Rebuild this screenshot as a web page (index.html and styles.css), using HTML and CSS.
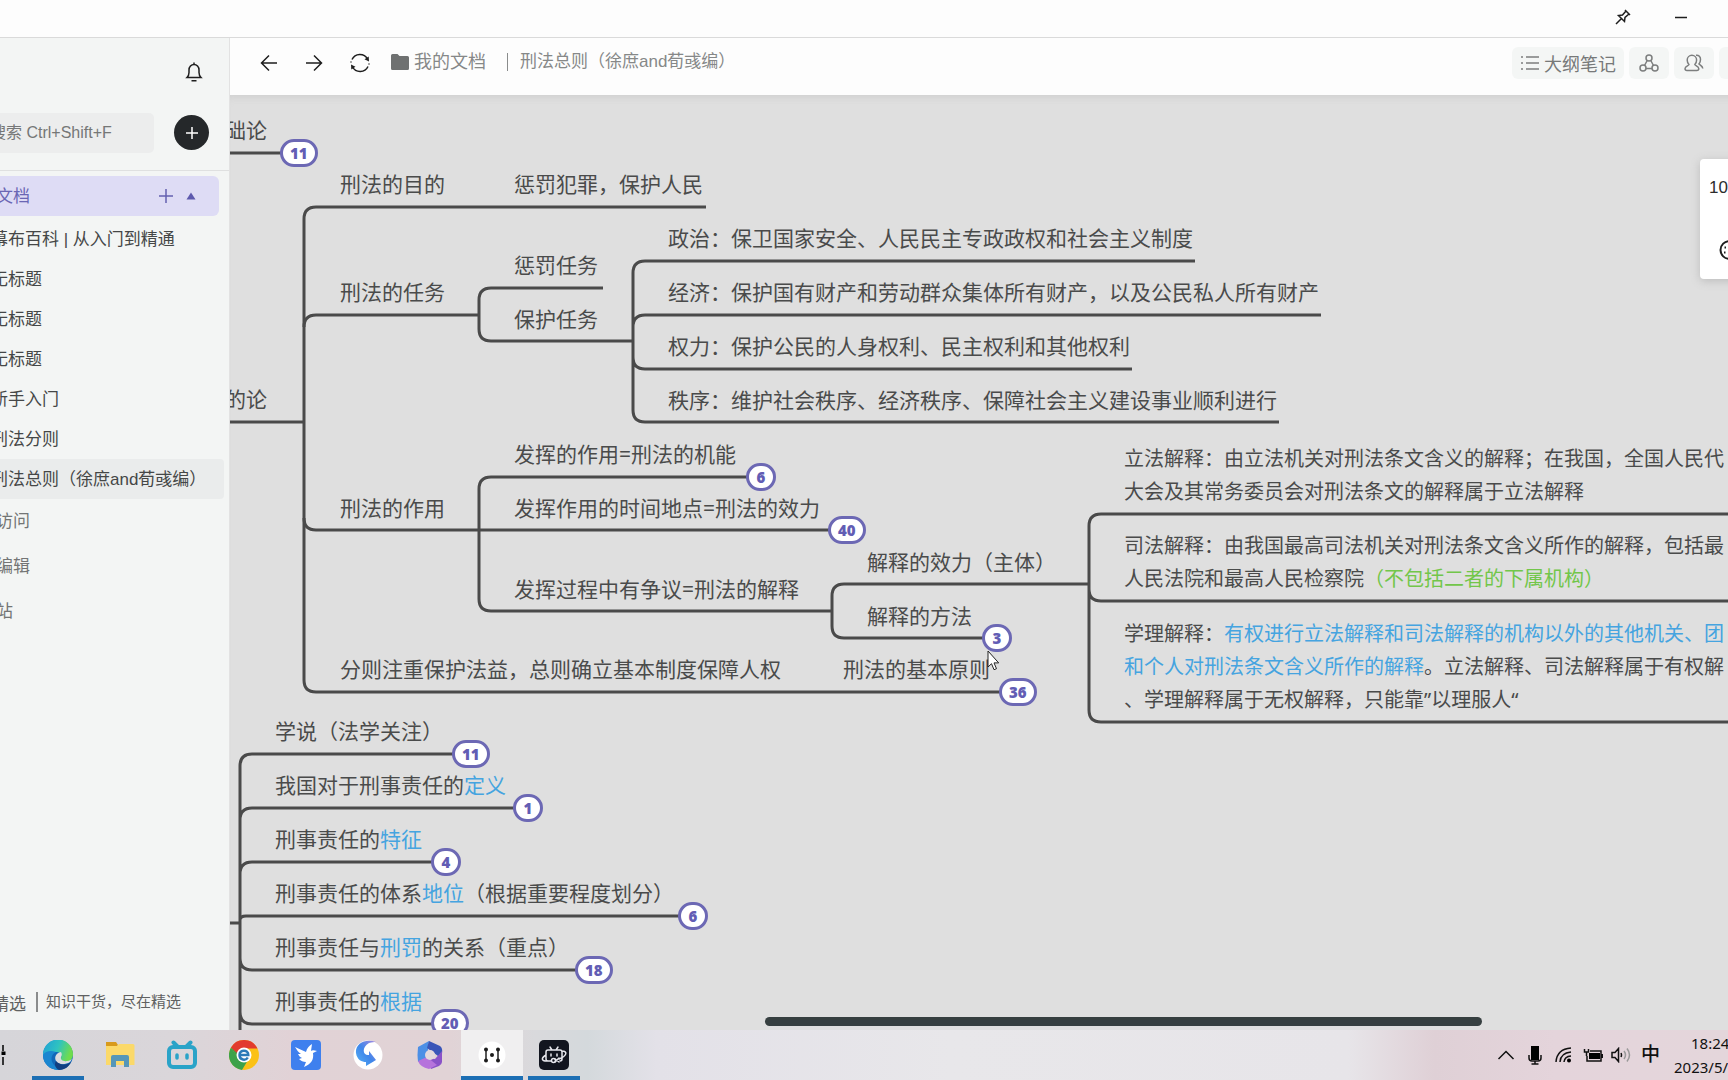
FILE: index.html
```html
<!DOCTYPE html>
<html lang="zh-CN">
<head>
<meta charset="utf-8">
<title>刑法总则</title>
<link rel="stylesheet" href="styles.css">
</head>
<body>
<div class="window">
  <header class="titlebar">
    <button class="win-btn" aria-label="置顶"><svg width="18" height="18" viewBox="0 0 18 18"><path d="M11 2l5 5M12 3L8.500 7 4.500 7.500l6 6 .5-4L15 6M7.500 10.500L2 16" /></svg></button>
    <button class="win-btn" aria-label="最小化"><svg width="14" height="14" viewBox="0 0 14 14"><path d="M1 7.500h12"/></svg></button>
  </header>
  <div class="body">
    <aside class="sidebar">
      <div class="side-top">
        <button class="icon-btn" aria-label="通知"><svg width="20" height="22" viewBox="0 0 20 22"><path d="M3 16.500c1.500-1.500 2-3 2-5V9a5 5.500 0 0 1 10 0v2.500c0 2 .5 3.500 2 5zM10 3.500V1.500M7.500 19.700h5"/></svg></button>
      </div>
      <div class="side-search">
        <input class="search" type="text" placeholder="搜索 Ctrl+Shift+F" aria-label="搜索">
        <button class="add" aria-label="新建"><svg width="14" height="14" viewBox="0 0 14 14"><path d="M7 1v12M1 7h12"/></svg></button>
      </div>
      <nav class="side-nav">
        <div class="folder-row">
          <a href="#">我的文档</a>
          <button class="mini" aria-label="添加"><svg width="16" height="16" viewBox="0 0 16 16"><path d="M8 1v14M1 8h14"/></svg></button>
          <button class="mini tri" aria-label="收起"><svg width="10" height="8" viewBox="0 0 10 8"><path d="M5 0.500L9.500 7.500h-9z"/></svg></button>
        </div>
        <a class="doc" href="#">幕布百科 | 从入门到精通</a>
        <a class="doc" href="#">无标题</a>
        <a class="doc" href="#">无标题</a>
        <a class="doc" href="#">无标题</a>
        <a class="doc" href="#">新手入门</a>
        <a class="doc" href="#">刑法分则</a>
        <a class="doc current" href="#">刑法总则（徐庶and荀彧编）</a>
        <a class="group" href="#">最近访问</a>
        <a class="group" href="#">最近编辑</a>
        <a class="group" href="#">回收站</a>
      </nav>
      <a class="side-foot" href="#"><span>精选</span><small>知识干货，尽在精选</small></a>
    </aside>

    <main class="main">
      <div class="toolbar">
        <div class="history">
          <button class="icon-btn" aria-label="后退"><svg width="18" height="18" viewBox="0 0 18 18"><path d="M17 9H1.500M9 1.500L1.500 9 9 16.500"/></svg></button>
          <button class="icon-btn" aria-label="前进"><svg width="18" height="18" viewBox="0 0 18 18"><path d="M1 9h15.500M9 1.500L16.500 9 9 16.500"/></svg></button>
          <button class="icon-btn" aria-label="刷新"><svg width="20" height="20" viewBox="0 0 20 20"><path d="M2 6.500A8.700 8.700 0 0 1 17.500 6M18 13.500A8.700 8.700 0 0 1 2.500 14M1 8.500v1M19 10.500v1"/><path class="solid" d="M18.700 3.500l.3 5-4.500-2.300zM1.300 16.500l-.3-5 4.500 2.300z"/></svg></button>
        </div>
        <div class="crumbs">
          <svg class="folder" width="18" height="16" viewBox="0 0 18 16"><path d="M1.500 0h5l2 2h8A1.500 1.500 0 0 1 18 3.500v11a1.500 1.500 0 0 1-1.500 1.500h-15A1.500 1.500 0 0 1 0 14.500v-13A1.500 1.500 0 0 1 1.500 0z"/></svg>
          <a href="#">我的文档</a><span class="bar"></span><span>刑法总则（徐庶and荀彧编）</span>
        </div>
        <div class="tools">
          <button class="tool"><svg width="20" height="16" viewBox="0 0 20 16"><path d="M6 2h13M6 8h13M6 14h13M1 2h2M1 8h2M1 14h2"/></svg>大纲笔记</button>
          <button class="tool" aria-label="导图"><svg width="20" height="18" viewBox="0 0 20 18"><circle cx="10" cy="4" r="3"/><circle cx="4" cy="14" r="3"/><circle cx="16" cy="14" r="3"/><path d="M8.200 6.500L5.500 11.500M11.800 6.500l2.700 5M7 14.500h6"/></svg></button>
          <button class="tool" aria-label="协作"><svg width="20" height="18" viewBox="0 0 20 18"><path d="M5 10.500C3.800 9.500 3.200 7.800 3.200 6a4.700 4.700 0 0 1 9.400 0c0 1.800-.6 3.500-1.800 4.500 0 1 4 1.500 4 4.300 0 1.500-1 1.700-2 1.700H3c-1 0-2-.2-2-1.700 0-2.800 4-3.300 4-4.300zM12 1.200c2.800-.4 4.700 1.800 4.500 4.300 0 2-.8 3.500-1.500 4.500 1.500 1.500 3.500 2 3.800 4.500"/></svg></button>
          <button class="tool" aria-label="更多"><svg width="18" height="4" viewBox="0 0 18 4"><path d="M1 2h2M8 2h2M15 2h2"/></svg></button>
        </div>
      </div>

      <div class="canvas">
        <div class="plane">
          <svg class="links" width="1760" height="1060" viewBox="0 0 1760 1060">
            <path d="M200 153h82M200 422h104M706 207H316q-12 0-12 12V680q0 12 12 12H1003"/>
            <path d="M304 327q0-12 12-12H479M304 518q0 12 12 12H830"/>
            <path d="M603 288H491q-12 0-12 12v29q0 12 12 12H633"/>
            <path d="M1195 261H645q-12 0-12 12V410q0 12 12 12H1279M633 327q0-12 12-12H1321M633 357q0 12 12 12H1132"/>
            <path d="M748 477H491q-12 0-12 12V599q0 12 12 12H832"/>
            <path d="M1089 584H844q-12 0-12 12v30q0 12 12 12H984"/>
            <path d="M1760 514H1101q-12 0-12 12V710q0 12 12 12H1760M1089 589q0 12 12 12H1760"/>
            <path d="M454 754H252q-12 0-12 12V1060M240 820q0-12 12-12H515M240 874q0-12 12-12H433M240 920q0-4 6-4H680M240 958q0 12 12 12H576M240 1012q0 12 12 12H433M200 923h40"/>
          </svg>
          <p class="node" style="left:204px;top:115px">基础论</p>
          <p class="node" style="left:204px;top:384px">目的论</p>
          <p class="node" style="left:340px;top:169px">刑法的目的</p>
          <p class="node" style="left:514px;top:169px">惩罚犯罪，保护人民</p>
          <p class="node" style="left:340px;top:277px">刑法的任务</p>
          <p class="node" style="left:514px;top:250px">惩罚任务</p>
          <p class="node" style="left:514px;top:304px">保护任务</p>
          <p class="node" style="left:668px;top:223px">政治：保卫国家安全、人民民主专政政权和社会主义制度</p>
          <p class="node" style="left:668px;top:277px">经济：保护国有财产和劳动群众集体所有财产，以及公民私人所有财产</p>
          <p class="node" style="left:668px;top:331px">权力：保护公民的人身权利、民主权利和其他权利</p>
          <p class="node" style="left:668px;top:385px">秩序：维护社会秩序、经济秩序、保障社会主义建设事业顺利进行</p>
          <p class="node" style="left:340px;top:493px">刑法的作用</p>
          <p class="node" style="left:514px;top:439px">发挥的作用=刑法的机能</p>
          <p class="node" style="left:514px;top:493px">发挥作用的时间地点=刑法的效力</p>
          <p class="node" style="left:514px;top:574px">发挥过程中有争议=刑法的解释</p>
          <p class="node" style="left:867px;top:547px">解释的效力（主体）</p>
          <p class="node" style="left:867px;top:601px">解释的方法</p>
          <p class="node" style="left:340px;top:654px">分则注重保护法益，总则确立基本制度保障人权</p>
          <p class="node" style="left:843px;top:654px">刑法的基本原则</p>
          <p class="node long" style="left:1124px;top:442px">立法解释：由立法机关对刑法条文含义的解释；在我国，全国人民代<br>大会及其常务委员会对刑法条文的解释属于立法解释</p>
          <p class="node long" style="left:1124px;top:529px">司法解释：由我国最高司法机关对刑法条文含义所作的解释，包括最<br>人民法院和最高人民检察院<em class="green">（不包括二者的下属机构）</em></p>
          <p class="node long" style="left:1124px;top:617px">学理解释：<em>有权进行立法解释和司法解释的机构以外的其他机关、团</em><br><em>和个人对刑法条文含义所作的解释</em>。立法解释、司法解释属于有权解<br>、学理解释属于无权解释，只能靠”以理服人“</p>
          <p class="node" style="left:275px;top:716px">学说（法学关注）</p>
          <p class="node" style="left:275px;top:770px">我国对于刑事责任的<em>定义</em></p>
          <p class="node" style="left:275px;top:824px">刑事责任的<em>特征</em></p>
          <p class="node" style="left:275px;top:878px">刑事责任的体系<em>地位</em>（根据重要程度划分）</p>
          <p class="node" style="left:275px;top:932px">刑事责任与<em>刑罚</em>的关系（重点）</p>
          <p class="node" style="left:275px;top:986px">刑事责任的<em>根据</em></p>
          <button class="count" style="left:280px;top:139px">11</button>
          <button class="count" style="left:746px;top:463px">6</button>
          <button class="count" style="left:828px;top:516px">40</button>
          <button class="count" style="left:982px;top:624px">3</button>
          <button class="count" style="left:999px;top:678px">36</button>
          <button class="count" style="left:452px;top:740px">11</button>
          <button class="count" style="left:513px;top:794px">1</button>
          <button class="count" style="left:431px;top:848px">4</button>
          <button class="count" style="left:678px;top:902px">6</button>
          <button class="count" style="left:575px;top:956px">18</button>
          <button class="count" style="left:431px;top:1009px">20</button>
          <svg class="cursor" style="left:987px;top:650px" width="14" height="22" viewBox="0 0 14 22"><path d="M1 1v16l3.500-3.300 2.500 6 2.500-1-2.500-5.800h4.700z"/></svg>
        </div>
        <div class="hscroll"></div>
        <div class="panel">
          <span>100%</span>
          <button class="icon-btn" aria-label="主题"><svg width="22" height="20" viewBox="0 0 22 20"><path class="thick" d="M20 12.500C19 16.500 15.500 19 11 19 5.500 19 1.500 15 1.500 10S5.500 1 11 1s9.500 4 9.500 8c0 3-4 3-6 3s-2.500 2-1 4"/><path class="thick" d="M5.500 7.500h1.500M5 12.500h1.500M9.500 5h1.500"/></svg></button>
        </div>
      </div>
    </main>
  </div>
</div>

<footer class="taskbar">
  <div class="apps">
    <button class="app slim" aria-label="任务视图"><svg width="12" height="22" viewBox="0 0 12 22"><path d="M8 1v6M8 13v8" stroke="#000" stroke-width="1.500"/><path d="M6.500 7.500h4v3.500h-4z"/></svg></button>
    <button class="app running" aria-label="Edge"><svg width="30" height="30" viewBox="0 0 30 30"><defs><linearGradient id="e1" x1="0" y1="0" x2="1" y2="0.300"><stop offset="0" stop-color="#1f9fd8"/><stop offset="0.550" stop-color="#2fc3c0"/><stop offset="1" stop-color="#6fdc4e"/></linearGradient></defs><circle cx="15" cy="15" r="15" fill="#1268b8"/><path d="M0 15A15 15 0 0 1 30 14c0 5-3 7.500-7 7.500-4 0-6-1.500-5-3.500 1-3-1-6-5-6-6 0-11 2-13 3z" fill="url(#e1)"/><path d="M13 12c-5 2-6 8-2 13 2 2 5 4 9 4l-5 1A15 15 0 0 1 0 15c2-4 8-5 13-3z" fill="#1a86d0"/><path d="M18 12c-5 1-7 5-5 9 3 4 9 4 14 1l2-3c-6 4-12 2-11-2 1-2 1-3 0-5z" fill="#dcdcdf"/><path d="M13 21c3 4 9 5 15 1-2 5-7 8-12 8-4-2-5-6-3-9z" fill="#123f80"/></svg></button>
    <button class="app" aria-label="文件资源管理器"><svg width="30" height="30" viewBox="0 0 30 30"><path d="M1 2h10l2 3-2 3H1z" fill="#d89a1c"/><path d="M1 6h11l2-2h14q1.500 0 1.500 1.500V25H1z" fill="#fbd96a"/><path d="M6 27V17q0-2 2-2h14q2 0 2 2v10h-5v-6h-8v6z" fill="#5596b8"/></svg></button>
    <button class="app" aria-label="哔哩哔哩"><svg width="32" height="30" viewBox="0 0 32 30" fill="none" stroke="#2aa3c8" stroke-linecap="round"><rect x="3" y="7" width="26" height="20" rx="4" stroke-width="4"/><path d="M7.500 2.500l4 4M24.500 2.500l-4 4" stroke-width="4"/><path d="M11 15v3M21 15v3" stroke-width="3.500"/></svg></button>
    <button class="app" aria-label="浏览器"><svg width="30" height="30" viewBox="0 0 30 30"><circle cx="15" cy="15" r="15" fill="#fbc116"/><path d="M2 7.500A15 15 0 0 0 13 30l6-10-10-2z" fill="#3da24a"/><path d="M2 7.500L9 19l6-10z" fill="#3da24a"/><path d="M2 7.500A15 15 0 0 1 28.500 8.500H15L9 14z" fill="#e23b2e"/><circle cx="15" cy="15" r="7.500" fill="#fff"/><path d="M10.500 15h8.800c0-5.800-8.800-5.800-8.800 0 0 5.500 6.500 5.800 8.300 2.500" fill="none" stroke="#2a7ab8" stroke-width="2.500"/></svg></button>
    <button class="app" aria-label="飞鸟"><svg width="30" height="30" viewBox="0 0 30 30"><rect width="30" height="30" rx="4" fill="#3f80ee"/><path d="M4 7l11 5c1-4 3-6 6-8l-1 7c1-1 3-1 6 0l-4 2c1 7-2 11-9 14l2-5c-3 0-5-1-7-3l3-1c-2-1-3-2-4-4l3 0c-3-2-4-4-6-7z" fill="#fff"/></svg></button>
    <button class="app" aria-label="同步"><svg width="30" height="30" viewBox="0 0 30 30"><defs><linearGradient id="s1" x1="0" y1="1" x2="1" y2="0"><stop offset="0" stop-color="#57b2f5"/><stop offset="0.500" stop-color="#3f86ea"/><stop offset="1" stop-color="#a78ae0"/></linearGradient></defs><circle cx="15" cy="15" r="14.500" fill="#fff"/><path d="M23 2C12-2 2 4 3 13c1 7 6 9 10 9v4l10-6-7-9v4c-6 1-8-7 0-12 3-1 5-1 7-1z" fill="url(#s1)"/></svg></button>
    <button class="app" aria-label="Microsoft 365"><svg width="28" height="30" viewBox="0 0 28 30"><path d="M2 7L13 1l-2 17-9 4q-1-7 0-15z" fill="#4c8fe6"/><path d="M13 1l11 5q3 2 2 8v5l-8-6-7-5z" fill="#3a55b8"/><path d="M26 11v11q0 2-3 4l-8 3-5-11 9 1z" fill="#8a52c8"/><path d="M2 21l9-4 10 8-8 4q-9-2-11-8z" fill="#b673dc"/><circle cx="14" cy="15" r="5" fill="#e3d8dc"/></svg></button>
    <button class="app running active" aria-label="幕布"><svg width="28" height="28" viewBox="0 0 28 28"><circle cx="14" cy="14" r="13.500" fill="#fff"/><path d="M8 8v12M20 8v12" fill="none" stroke="#222"/><g fill="#1c1c1c"><circle cx="8" cy="8.500" r="2"/><circle cx="8" cy="19.500" r="2"/><circle cx="20" cy="8.500" r="2"/><circle cx="20" cy="19.500" r="2"/><circle cx="14" cy="14" r="2"/></g></svg></button>
    <button class="app running" aria-label="录制"><svg width="30" height="30" viewBox="0 0 30 30"><rect width="30" height="30" rx="5" fill="#12151f"/><g fill="none" stroke="#e8e8ee" stroke-width="1.500" stroke-linecap="round"><path d="M12 21H9q-2 0-2-2v-7q0-2 2-2h12q2 0 2 2v7q0 2-2 2M11 7l2 3M19 7l-2 3M12 14v2M18 14v2M7 15c-5 3-5 6 1 6M23 11c6 0 5 5-3 8"/><circle cx="14.500" cy="20.500" r="2"/><path d="M16 19l4 3M16 22l4-4"/></g></svg></button>
  </div>
  <div class="tray">
    <div class="tray-item"><svg width="18" height="10" viewBox="0 0 18 10"><path d="M1.500 9L9 1.500 16.500 9"/></svg></div>
    <div class="tray-item"><svg width="14" height="20" viewBox="0 0 14 20"><path class="fill" d="M3 1h8v14H3z"/><path d="M1 10v3q0 3 3 3h6q3 0 3-3v-3M7 16v3M3.500 19h7"/></svg></div>
    <div class="tray-item"><svg width="17" height="16" viewBox="0 0 17 16"><path d="M1 15Q2 2 16 1M5 15Q5.500 6 16 5M9 15Q9.500 9.500 16 9"/><circle class="fill" cx="14" cy="13.500" r="2"/></svg></div>
    <div class="tray-item"><svg width="20" height="14" viewBox="0 0 20 14"><path class="fill" d="M6 5h11v6H6z"/><path d="M7 3h11v10H4V8M19.500 6v4M1.500 1v3h4V1M3.500 4v4"/></svg></div>
    <div class="tray-item"><svg width="21" height="16" viewBox="0 0 21 16"><path d="M1 5.500h3l3.500-4v13L4 10.500H1zM10 6q1 2 0 4"/><path class="faint" d="M13 4q3 4 0 8M16 1.500q5 6.500 0 13"/></svg></div>
    <div class="tray-item ime">中</div>
    <div class="clock"><time>18:24</time><span>2023/5/</span></div>
  </div>
</footer>
</body>
</html>
```
FILE: styles.css
```css
* { box-sizing: border-box; }

body {
  margin: 0;
  height: 100vh;
  display: flex;
  flex-direction: column;
  overflow: hidden;
  font-family: "Liberation Sans", "Noto Sans CJK SC", sans-serif;
  font-size: 17px;
  color: #4a4c4c;
  background: #dfdfdf;
}

button { margin: 0; padding: 0; border: 0; background: none; font: inherit; color: inherit; }
a { color: inherit; text-decoration: none; }
svg { display: block; flex: none; fill: none; stroke-width: 1.5; }

/* The window is wider than the screen and hangs over both edges. */
.window {
  flex: 1;
  min-height: 0;
  display: flex;
  flex-direction: column;
  margin: 0 -31px 0 -60px;
  background: #fdfdfd;
}

.titlebar {
  flex: none;
  height: 38px;
  display: flex;
  justify-content: flex-end;
  align-items: center;
  gap: 42px;
  padding: 0 71px 4px 0;
  border-bottom: 1px solid #dadada;
}
.win-btn svg, .icon-btn svg { stroke: #1e1e1e; }

.body { flex: 1; min-height: 0; display: flex; }

.sidebar {
  flex: none;
  width: 290px;
  display: flex;
  flex-direction: column;
  background: #f3f5f4;
  border-right: 1px solid #e2e2e2;
  white-space: nowrap;
}
.side-top { height: 67px; padding-right: 25px; display: flex; justify-content: flex-end; align-items: center; }
.side-search {
  height: 66px;
  display: flex;
  align-items: center;
  gap: 20px;
  padding: 0 0 10px 20px;
  border-bottom: 1px solid #dfe0e0;
}
.search {
  width: 194px;
  height: 40px;
  padding: 0 0 0 30px;
  border: 0;
  border-radius: 5px;
  background: #eceded;
  font: inherit;
  font-size: 16px;
}
.search::placeholder { color: #757777; opacity: 1; }
.add {
  width: 35px;
  height: 35px;
  display: grid;
  place-items: center;
  border-radius: 50%;
  background: #25282a;
}
.add svg { stroke: #fff; }

.side-nav { flex: 1; display: flex; flex-direction: column; padding-top: 5px; color: #454747; }
.folder-row {
  display: flex;
  align-items: center;
  gap: 12px;
  height: 40px;
  margin: 0 10px 3px 0;
  padding: 0 23px 0 22px;
  border-radius: 6px;
  background: #dedcf5;
  color: #6a66b4;
}
.folder-row a { flex: 1; padding-bottom: 3px; }
.mini svg { stroke: #6460b0; }
.tri svg { fill: #5e5aae; stroke: none; }
.doc { height: 40px; line-height: 41px; margin-right: 5px; padding-left: 51px; }
.doc.current { background: #eaecec; border-radius: 0 4px 4px 0; }
.group { height: 45px; line-height: 45px; padding-left: 22px; color: #737575; }
.side-foot { display: flex; align-items: center; height: 56px; padding-left: 52px; color: #5f6161; }
.side-foot small { margin-left: 10px; padding-left: 8px; border-left: 2px solid #8a8c8c; font-size: 15px; line-height: 20px; }

.main { flex: 1; min-width: 0; display: flex; flex-direction: column; }
.toolbar { flex: none; height: 57px; display: flex; align-items: center; padding: 0 0 7px 30px; white-space: nowrap; }
.history { display: flex; align-items: center; gap: 27px; }
.crumbs { display: flex; align-items: center; margin-left: 21px; color: #868888; line-height: 22px; padding-bottom: 2px; }
.crumbs a { font-size: 18px; }
.folder { fill: #6f7171; margin-right: 5px; }
.bar { width: 1px; height: 18px; margin: 0 12px 0 21px; background: #8a8c8c; }
.icon-btn .solid { fill: #1e1e1e; stroke: none; }
.icon-btn .thick { stroke-width: 2; }
.tools { display: flex; gap: 5px; margin-left: auto; }
.tool {
  min-width: 40px;
  height: 32px;
  display: flex;
  align-items: center;
  justify-content: center;
  gap: 4px;
  padding: 0 8px;
  border-radius: 6px;
  background: #f4f6f5;
  color: #777979;
  font-size: 18px;
}
.tool svg { stroke: #7c7e7e; }

.canvas {
  position: relative;
  flex: 1;
  overflow: hidden;
  background: #dfdfdf;
  box-shadow: inset 0 8px 8px -6px #cfcfcf;
}
/* The map's own coordinate space, panned under the canvas. */
.plane { position: absolute; left: -230px; top: -95px; }
.links { position: absolute; stroke: #4a4a4a; stroke-width: 3; }
.node {
  position: absolute;
  margin: 0;
  font-family: "Noto Sans", "Noto Sans CJK SC", sans-serif;
  font-size: 21px;
  line-height: 30px;
  white-space: nowrap;
  color: #4a4b4b;
}
.node.long { font-size: 20px; line-height: 33px; }
.node em { font-style: normal; color: #45a4e0; }
.node em.green { color: #72c64a; }
.count {
  position: absolute;
  min-width: 30px;
  height: 28px;
  padding: 0 7px;
  border: 3px solid #6c68b4;
  border-radius: 14px;
  background: #fff;
  color: #625db4;
  font: 800 15px/20px "Open Sans", sans-serif;
}
.cursor { position: absolute; fill: #fff; stroke: #222; stroke-width: 1; }
.hscroll {
  position: absolute;
  left: 535px;
  right: 277px;
  bottom: 4px;
  height: 9px;
  border-radius: 5px;
  background: #363f40;
}
.panel {
  position: absolute;
  top: 64px;
  right: 0;
  width: 59px;
  height: 120px;
  display: flex;
  flex-direction: column;
  justify-content: space-between;
  padding: 19px 9px;
  border-radius: 4px 0 0 4px;
  background: #fff;
  box-shadow: 0 2px 10px #bcbcbc;
  color: #2c2c2c;
}
.panel .icon-btn { align-self: center; }

.taskbar {
  position: relative;
  flex: none;
  height: 50px;
  display: flex;
  justify-content: space-between;
  background: linear-gradient(90deg, #d6d5d9 0, #dad6da 10%, #e1d2d6 17%, #e1d3d6 26%, #d9d9dc 31%, #d4d9dc 34%, #e3e1e8 38%, #e8e7ea 55%, #e7e5e9 78%, #dfd0d6 83%, #e4d4db 90%, #e4d6db 100%);
}
.apps { display: flex; }
.app { width: 62px; display: grid; place-items: center; border: 0 solid transparent; border-width: 4px 0; }
.app.slim { width: 27px; justify-items: start; }
.app.slim svg { fill: #000; margin-left: -5px; }
.app.running { width: 52px; margin: 0 5px; border-bottom-color: #1c6fb4; }
.app.active { width: 62px; margin: 0; background: #f0eff0; }
.tray { display: flex; align-items: center; color: #111; }
.tray-item { width: 29px; display: grid; place-items: center; }
.tray svg { stroke: #111; }
.tray .fill { fill: #000; stroke: none; }
.tray .faint { stroke: #999; }
.ime { font-size: 19px; font-weight: 500; line-height: 24px; }
.clock {
  width: 54px;
  margin-left: 9px;
  font: 15px/24px "Noto Sans", sans-serif;
  overflow: hidden;
  white-space: nowrap;
}
.clock time { display: block; padding-left: 17px; }
```
